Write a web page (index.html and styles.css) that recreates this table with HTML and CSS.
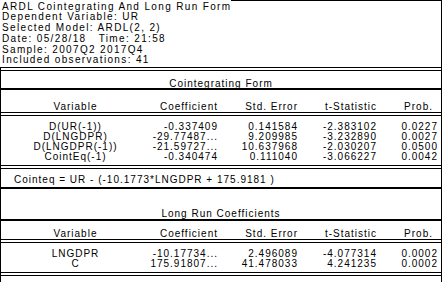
FILE: index.html
```html
<!DOCTYPE html>
<html>
<head>
<meta charset="utf-8">
<link rel="stylesheet" href="styles.css">
</head>
<body>
<div class="page">
  <div class="head">
    <div class="meta">
      <div>ARDL Cointegrating And Long Run Form</div>
      <div>Dependent Variable: UR</div>
      <div>Selected Model: ARDL(2, 2)</div>
      <div>Date: 05/28/18&nbsp;&nbsp; Time: 21:58</div>
      <div>Sample: 2007Q2 2017Q4</div>
      <div>Included observations: 41</div>
    </div>
    <div class="fill"></div>
  </div>
  <div class="sheet">
    <div class="rule-dbl"></div>
    <div class="title t1">Cointegrating Form</div>
    <div class="rule-thick"></div>
    <div class="grid hdr h1">
      <div class="c0">Variable</div>
      <div class="num">Coefficient</div>
      <div class="num">Std. Error</div>
      <div class="num">t-Statistic</div>
      <div class="num prob-h">Prob.</div>
    </div>
    <div class="rule-dbl"></div>
    <div class="data d1">
      <div class="grid row"><div class="c0">D(UR(-1))</div><div class="num">-0.337409</div><div class="num">0.141584</div><div class="num">-2.383102</div><div class="num">0.0227</div></div>
      <div class="grid row"><div class="c0">D(LNGDPR)</div><div class="num">-29.77487...</div><div class="num">9.209985</div><div class="num">-3.232890</div><div class="num">0.0027</div></div>
      <div class="grid row"><div class="c0">D(LNGDPR(-1))</div><div class="num">-21.59727...</div><div class="num">10.637968</div><div class="num">-2.030207</div><div class="num">0.0500</div></div>
      <div class="grid row"><div class="c0">CointEq(-1)</div><div class="num">-0.340474</div><div class="num">0.111040</div><div class="num">-3.066227</div><div class="num">0.0042</div></div>
    </div>
    <div class="rule-dbl"></div>
    <div class="eq">Cointeq = UR - (-10.1773*LNGDPR + 175.9181 )</div>
    <div class="rule-thick"></div>
    <div class="title t2">Long Run Coefficients</div>
    <div class="rule-thick"></div>
    <div class="grid hdr h2">
      <div class="c0">Variable</div>
      <div class="num">Coefficient</div>
      <div class="num">Std. Error</div>
      <div class="num">t-Statistic</div>
      <div class="num prob-h">Prob.</div>
    </div>
    <div class="rule-dbl"></div>
    <div class="data d2">
      <div class="grid row"><div class="c0">LNGDPR</div><div class="num">-10.17734...</div><div class="num">2.496089</div><div class="num">-4.077314</div><div class="num">0.0002</div></div>
      <div class="grid row"><div class="c0">C</div><div class="num">175.91807...</div><div class="num">41.478033</div><div class="num">4.241235</div><div class="num">0.0002</div></div>
    </div>
    <div class="rule-dbl"></div>
  </div>
</div>
</body>
</html>
```
FILE: styles.css
```css
html, body {
  margin: 0;
  padding: 0;
  background: #ffffff;
}

.page {
  width: 442px;
  height: 282px;
  box-sizing: border-box;
  border-right: 1px solid #000;
  font-family: "Liberation Sans", Arial, sans-serif;
  font-size: 10px;
  letter-spacing: 1px;
  color: #000;
  display: flex;
  flex-direction: column;
}

.head {
  display: flex;
  height: 67px;
}

.meta {
  padding-top: 1.5px;
  padding-left: 2px;
  line-height: 10.8px;
  letter-spacing: 1.35px;
  white-space: nowrap;
}

.fill {
  flex: 1;
  border-top: 1px solid #000;
}

.sheet {
  flex: 1;
  border-left: 1px solid #000;
}

.rule-dbl {
  height: 2px;
  border-top: 1px solid #000;
  border-bottom: 1px solid #000;
}

.rule-thick {
  height: 2px;
  background: #000;
}

.title {
  text-align: center;
  line-height: 10px;
}

.t1 {
  height: 17px;
  padding-top: 8px;
  box-sizing: border-box;
}

.t2 {
  height: 30px;
  padding-top: 20px;
  box-sizing: border-box;
}

.grid {
  display: grid;
  grid-template-columns: 149px 68px 80px 79px 61px;
  line-height: 10px;
  white-space: nowrap;
}

.c0 {
  text-align: center;
}

.num {
  text-align: right;
}

.prob-h {
  padding-right: 5px;
}

.hdr {
  box-sizing: border-box;
}

.h1 {
  height: 22px;
  padding-top: 12px;
}

.h2 {
  height: 18px;
  padding-top: 8px;
}

.data {
  box-sizing: border-box;
}

.d1 {
  height: 49px;
  padding-top: 6px;
}

.d2 {
  height: 29px;
  padding-top: 6px;
}

.row {
  height: 10px;
}

.eq {
  height: 18px;
  box-sizing: border-box;
  padding-top: 6px;
  padding-left: 13px;
  line-height: 10px;
  white-space: nowrap;
}
```
